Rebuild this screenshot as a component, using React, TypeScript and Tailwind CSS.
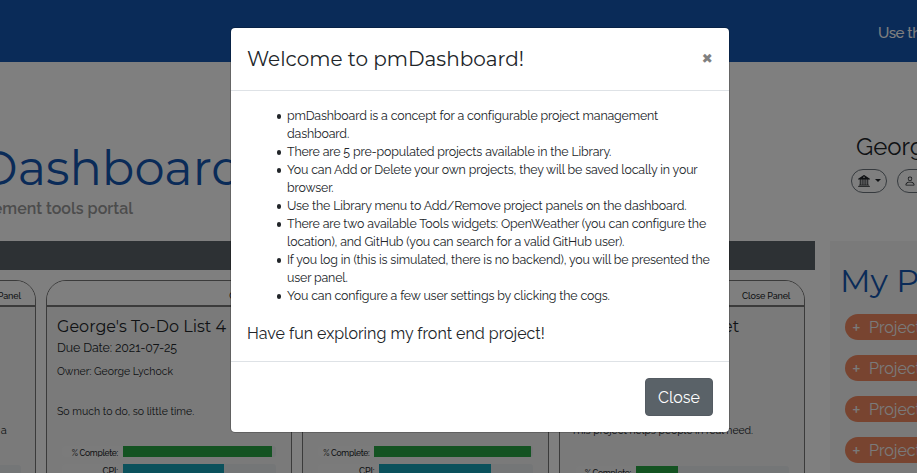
import React from "react";
import { BsBank2, BsPerson } from "react-icons/bs";

const display = "font-['Montserrat','Inter',sans-serif]";
const line = "block whitespace-nowrap";

function Meter({ label, labelClass, fillClass }: { label: string; labelClass: string; fillClass: string }) {
  return (
    <div className="flex h-[11px] w-full overflow-hidden rounded-[3px] bg-[#e9ecef]">
      <div className={`shrink-0 bg-[#f7f7f7] pr-[5px] text-right leading-[15px] font-medium whitespace-nowrap ${labelClass}`}>{label}</div>
      <div className={`h-full shrink-0 ${fillClass}`} />
    </div>
  );
}

function Panel({ children }: { children: React.ReactNode }) {
  return (
    <section className="h-[240px] w-[246.33px] shrink-0 overflow-hidden rounded-t-[20px] border border-[#777] bg-[#f5f5f5]">
      <div className="flex h-[26px] justify-end border-b-2 border-[#777] bg-white pr-[14px] text-[9px] leading-[31px] font-medium tracking-[-0.15px] whitespace-nowrap">
        Close Panel
      </div>
      {children}
    </section>
  );
}

function Dashboard() {
  return (
    <div className="h-full bg-white text-[#212529]">
      <header className="flex h-[62px] justify-end bg-[#1456b0] text-white">
        <span className="w-[39px] pt-[23px] text-[15px] leading-[21px] font-medium tracking-[-0.45px] whitespace-nowrap">Use the tools</span>
      </header>
      <div className="flex h-[179px] justify-between overflow-hidden">
        <div className="flex w-[240px] flex-col items-start pt-[76px]">
          <h1 className={`${display} -ml-[22px] text-[48px] leading-[60px] font-normal text-[#1456b0]`}>Dashboard</h1>
          <p className="mt-px flex w-[133px] justify-end text-[16px] leading-[20px] font-semibold whitespace-nowrap text-[#999]">Project management tools portal</p>
        </div>
        <div className="w-[66px] pt-[69px]">
          <div className="pl-[5px] text-[24px] leading-[32px] whitespace-nowrap">George</div>
          <div className="mt-[6px] flex gap-[10px]">
            <div className="flex h-[24px] w-[36px] shrink-0 items-center gap-[5px] rounded-full border border-[#6c757d] pl-[6px]">
              <BsBank2 size={12} />
              <span className="mb-px border-x-[3.5px] border-t-[3.5px] border-x-transparent border-t-[#212529]" />
            </div>
            <div className="flex h-[24px] w-[36px] shrink-0 items-center rounded-full border border-[#6c757d] pl-[6px]">
              <BsPerson size={12} />
            </div>
          </div>
        </div>
      </div>
      <div className="flex h-[232px] gap-[15px] overflow-hidden">
        <main className="w-[815px] shrink-0 overflow-hidden">
          <div className="h-[29px] bg-[#5a6268]" />
          <div className="mt-[10px] -ml-[210.5px] flex gap-[10.17px]">
            <Panel>
              <div className="pt-[116px] pr-[28px] text-right text-[11px] leading-[16px]">a</div>
              <div className="mt-[26px] mr-[14px] h-[11px] rounded-[3px] bg-[#e9ecef]" />
            </Panel>
            <Panel>
              <div className="px-[10px] whitespace-nowrap">
                <h3 className={`${display} pt-[10px] text-[16px] leading-[20px] tracking-[0.03px]`}>George's To-Do List 4</h3>
                <p className="mt-[2px] text-[12.4px] leading-[18px] tracking-[-0.1px]">Due Date: 2021-07-25</p>
                <p className="mt-[6px] text-[10.5px] leading-[16px]">Owner: George Lychock</p>
                <p className="mt-[24px] text-[10.5px] leading-[16px]">So much to do, so little time.</p>
              </div>
              <div className="mt-[27px] mr-[15px] ml-[15px] flex flex-col gap-[7px]">
                <Meter label="% Complete:" labelClass="w-[61px] text-[8.5px] tracking-[-0.3px]" fillClass="w-[149px] bg-[#28a745]" />
                <Meter label="CPI:" labelClass="w-[61px] text-[9px] tracking-[-0.1px]" fillClass="w-[101px] bg-[#17a2b8]" />
              </div>
            </Panel>
            <Panel>
              <div className="mt-[139px] mr-[15px] ml-[15px] flex flex-col gap-[7px]">
                <Meter label="% Complete:" labelClass="w-[56px] text-[8.5px] tracking-[-0.3px]" fillClass="w-[157px] bg-[#28a745]" />
                <Meter label="CPI:" labelClass="w-[61px] text-[9px] tracking-[-0.1px]" fillClass="w-[112px] bg-[#17a2b8]" />
              </div>
            </Panel>
            <Panel>
              <div className="px-[11px] whitespace-nowrap">
                <h3 className={`${display} pt-[10px] pr-[54px] text-right text-[16px] leading-[20px]`}>et</h3>
                <p className="mt-[85px] text-[10.5px] leading-[16px] tracking-[-0.06px]">This project helps people in real need.</p>
              </div>
              <div className="mt-[28px] mr-[15px] ml-[16px]">
                <Meter label="% Complete:" labelClass="w-[60px] text-[8.5px] tracking-[-0.3px]" fillClass="w-[42px] bg-[#28a745]" />
              </div>
            </Panel>
          </div>
        </main>
        <aside className="w-[87px] shrink-0 overflow-hidden bg-[#f5f5f5] whitespace-nowrap">
          <h2 className={`${display} pt-[20px] pl-[10px] text-[32px] leading-[40px] font-normal text-[#1456b0]`}>My Projects</h2>
          <div className="mt-[13px] flex flex-col gap-[15px] pl-[15px]">
            {[1, 2, 3, 4].map((n) => (
              <div key={n} className="flex h-[26px] w-[180px] items-center rounded-full bg-[#f08860] pt-px pl-[7px] text-[16px] leading-[24px] text-[#f5f5f5]">
                <span className="w-[17px] text-[21px] leading-[22px]">+</span>Project {n}
              </div>
            ))}
          </div>
        </aside>
      </div>
    </div>
  );
}

const notes: string[][] = [
  ["pmDashboard is a concept for a configurable project management", "dashboard."],
  ["There are 5 pre-populated projects available in the Library."],
  ["You can Add or Delete your own projects, they will be saved locally in your", "browser."],
  ["Use the Library menu to Add/Remove project panels on the dashboard."],
  ["There are two available Tools widgets: OpenWeather (you can configure the", "location), and GitHub (you can search for a valid GitHub user)."],
  ["If you log in (this is simulated, there is no backend), you will be presented the", "user panel."],
  ["You can configure a few user settings by clicking the cogs."],
];

function Welcome() {
  return (
    <div className="h-[406px] w-[500px] rounded-[5px] border border-black/20 bg-white bg-clip-padding text-[#212529]">
      <div className="flex h-[63px] justify-between border-b border-[#dee2e6] px-4">
        <h5 className={`${display} pt-[16px] text-[20px] leading-[30px] font-normal whitespace-nowrap`}>Welcome to pmDashboard!</h5>
        <span className="pt-[17px] text-[24px] leading-[24px] font-bold text-[#808080]">×</span>
      </div>
      <div className="h-[270px] px-4 pt-4">
        <ul className="pl-[40px] text-[12.4px] leading-[18px] tracking-[-0.16px]">
          {notes.map((lines, i) => (
            <li key={i} className="relative">
              <span className="absolute top-[7px] -left-[10px] h-[5px] w-[4px] rounded-full bg-[#212529]" />
              {lines.map((text) => (
                <span key={text} className={line}>{text}</span>
              ))}
            </li>
          ))}
        </ul>
        <p className="mt-[17px] text-[16px] leading-[24px] whitespace-nowrap">Have fun exploring my front end project!</p>
      </div>
      <div className="flex justify-end border-t border-[#dee2e6] p-4">
        <button className="h-[38px] w-[68px] rounded-[4px] border border-[#545b62] bg-[#5a6268] pt-px text-[16px] leading-[24px] text-white">Close</button>
      </div>
    </div>
  );
}

export default function App() {
  return (
    <div className="relative h-[473px] w-[917px] overflow-hidden font-['Raleway','Lato',sans-serif]">
      <Dashboard />
      <div className="absolute inset-0 bg-black/50 pt-[27px] pl-[230px]">
        <Welcome />
      </div>
    </div>
  );
}
